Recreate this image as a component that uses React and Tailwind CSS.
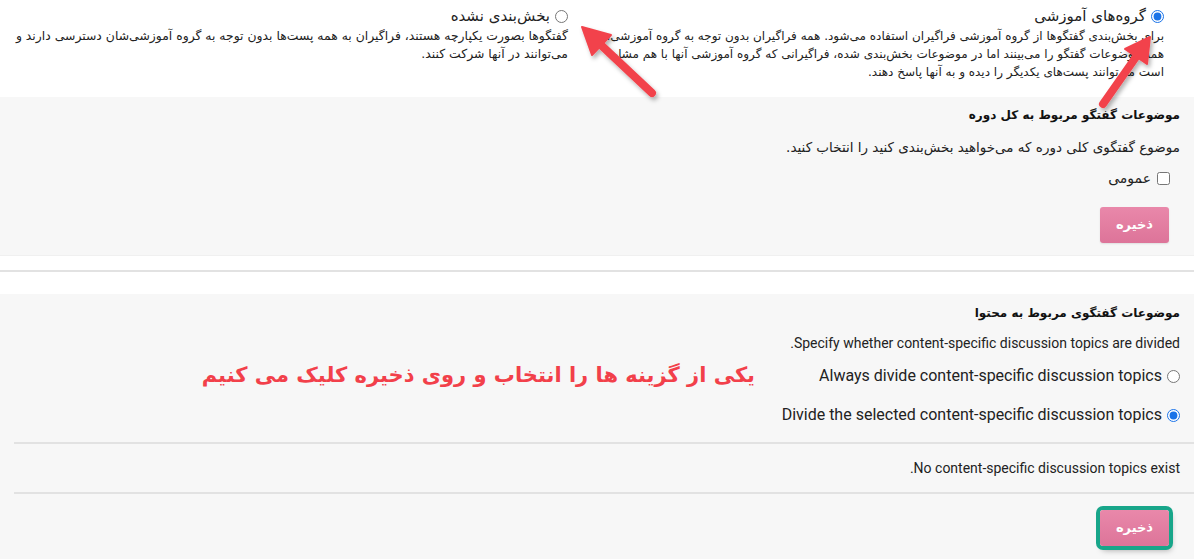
const Z = '\u200c'

const fa = { fontFamily: 'Tahoma, "DejaVu Sans", sans-serif' }

function Arrows() {
  return (
    <svg
      className="absolute inset-0 pointer-events-none"
      width="1194"
      height="559"
      viewBox="0 0 1194 559"
    >
      <defs>
        <filter id="sh" x="-20%" y="-20%" width="140%" height="140%">
          <feDropShadow dx="2" dy="3" stdDeviation="2" floodColor="#000" floodOpacity="0.3" />
        </filter>
      </defs>
      <g filter="url(#sh)" fill="#f2434c" stroke="#f2434c">
        <line x1="652" y1="93" x2="602" y2="46" strokeWidth="8" strokeLinecap="round" />
        <polygon points="582,27 611,35 592,55" strokeWidth="2" strokeLinejoin="round" />
        <line x1="1103" y1="104" x2="1136" y2="57" strokeWidth="8" strokeLinecap="round" />
        <polygon points="1150,37 1147,64 1125,49" strokeWidth="2" strokeLinejoin="round" />
      </g>
    </svg>
  )
}

function Option({ checked, label, lines, width, size }) {
  return (
    <div className="flex flex-col" style={{ width }}>
      <label className="flex items-center gap-[5px] h-[22px] text-[15px] text-[#222]">
        <input
          type="radio"
          name="grp"
          defaultChecked={checked}
          className="m-0 w-[13px] h-[13px] accent-[#1a73e8]"
        />
        <span>{label}</span>
      </label>
      <p className={size + ' leading-[18px] text-[#222]'}>
        {lines.map((l, i) => (
          <span key={i} className="block whitespace-nowrap">
            {l}
          </span>
        ))}
      </p>
    </div>
  )
}

function SaveButton({ framed }) {
  return (
    <button
      className={
        'w-[69px] h-[36px] rounded-[3px] bg-gradient-to-b from-[#e988aa] to-[#dd7499] text-white text-[13px] font-bold ' +
        (framed ? 'ring-4 ring-[#18a68a] shadow-[2px_4px_6px_rgba(0,0,0,0.35)]' : 'shadow-[0_1px_2px_rgba(0,0,0,0.1)]')
      }
      style={fa}
    >
      ذخیره
    </button>
  )
}

export default function App() {
  return (
    <div dir="rtl" className="relative w-[1194px] h-[559px] overflow-hidden bg-white" style={fa}>
      <div className="flex gap-[34px] pr-[30px] pt-[5px] h-[97px]">
        <Option
          checked
          width="562px"
          size="text-[12px]"
          label={`گروه${Z}های آموزشی`}
          lines={[
            `برای بخش${Z}بندی گفتگوها از گروه آموزشی فراگیران استفاده می${Z}شود. همه فراگیران بدون توجه به گروه آموزشی،`,
            `همه موضوعات گفتگو را می${Z}بینند اما در موضوعات بخش${Z}بندی شده، فراگیرانی که گروه آموزشی آنها با هم مشابه`,
            `است می${Z}توانند پست${Z}های یکدیگر را دیده و به آنها پاسخ دهند.`,
          ]}
        />
        <Option
          width="551px"
          size="text-[12.4px]"
          label={`بخش${Z}بندی نشده`}
          lines={[
            `گفتگوها بصورت یکپارچه هستند، فراگیران به همه پست${Z}ها بدون توجه به گروه آموزشی${Z}شان دسترسی دارند و`,
            `می${Z}توانند در آنها شرکت کنند.`,
          ]}
        />
      </div>

      <section className="bg-[#f7f7f7] h-[159px] pr-[14px] pt-[8px] border-b border-[#f0f0f0]">
        <h3 className="text-[12px] leading-[20px] font-bold text-[#111]">موضوعات گفتگو مربوط به کل دوره</h3>
        <p className="mt-[12px] text-[13.5px] leading-[20px] text-[#222]">
          موضوع گفتگوی کلی دوره که می{Z}خواهید بخش{Z}بندی کنید را انتخاب کنید.
        </p>
        <label className="mt-[9px] flex items-center gap-[6px] h-[24px] pr-[10px] text-[14px] text-[#222]">
          <input type="checkbox" className="m-0 w-[13px] h-[13px]" />
          <span>عمومی</span>
        </label>
        <div className="mt-[17px] pr-[11px]">
          <SaveButton />
        </div>
      </section>

      <div className="h-[14px]" />
      <div className="h-[2px] bg-[#e2e2e2]" />
      <div className="h-[22px]" />

      <section className="relative bg-[#f7f7f7] h-[265px] pt-[9px]">
        <div className="pr-[14px]">
          <h3 className="text-[12px] leading-[20px] font-bold text-[#111]">موضوعات گفتگوی مربوط به محتوا</h3>
          <p
            className="mt-[10px] text-[14px] leading-[20px] text-[#222]"
            style={{ fontFamily: 'Roboto, "DejaVu Sans", sans-serif' }}
          >
            Specify whether content-specific discussion topics are divided.
          </p>
          <div style={{ fontFamily: 'Roboto, sans-serif' }} className="text-[16px] text-[#222]">
            <label className="mt-[11px] flex items-center gap-[5px] h-[24px]">
              <input type="radio" name="cs" className="m-0 w-[13px] h-[13px]" />
              <span>Always divide content-specific discussion topics</span>
            </label>
            <label className="mt-[15px] flex items-center gap-[5px] h-[24px]">
              <input type="radio" name="cs" defaultChecked className="m-0 w-[13px] h-[13px] accent-[#1a73e8]" />
              <span>Divide the selected content-specific discussion topics</span>
            </label>
          </div>
        </div>
        <div className="mt-[15px] ml-[14px] h-[2px] bg-[#e2e2e2]" />
        <p
          className="mt-[14px] pr-[14px] text-[14px] leading-[20px] text-[#222]"
          style={{ fontFamily: 'Roboto, sans-serif' }}
        >
          No content-specific discussion topics exist.
        </p>
        <div className="mt-[14px] ml-[14px] h-[2px] bg-[#e2e2e2]" />
        <div className="mt-[16px] pr-[25px]">
          <SaveButton framed />
        </div>

        <div className="absolute top-[66px] right-[439px] text-[21px] font-bold text-[#f2404a] leading-[30px] whitespace-nowrap">
          یکی از گزینه ها را انتخاب و روی ذخیره کلیک می کنیم
        </div>
      </section>

      <Arrows />
    </div>
  )
}
